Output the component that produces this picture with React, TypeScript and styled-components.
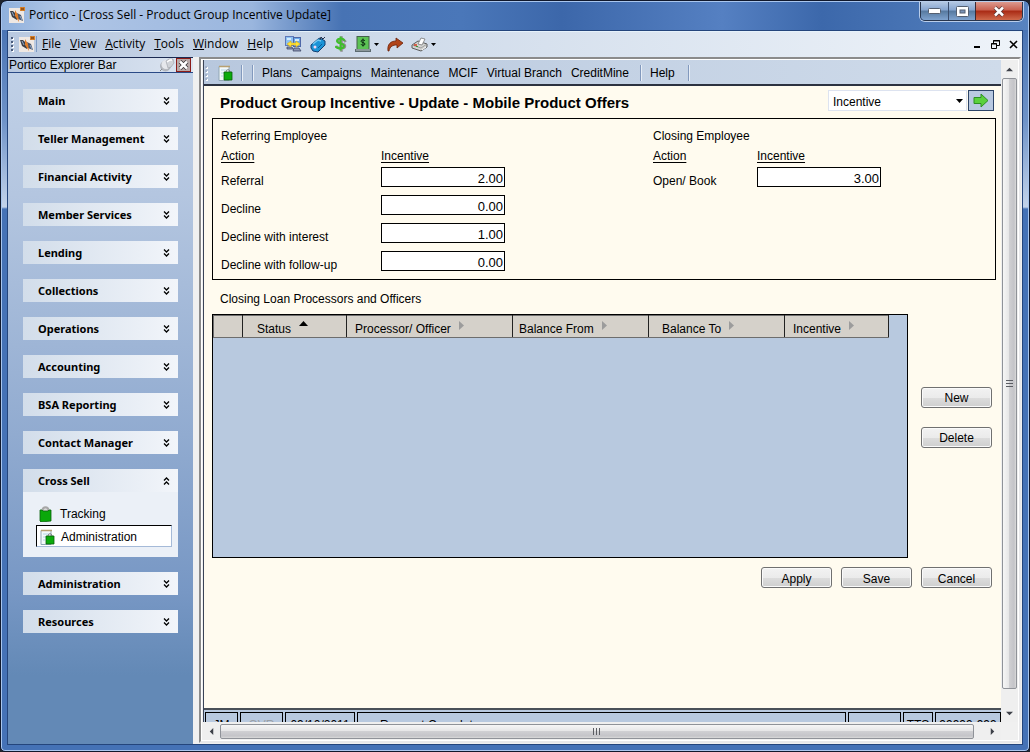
import React from 'react';
import styled, { createGlobalStyle } from 'styled-components';

const Global = createGlobalStyle`
  * { box-sizing: border-box; }
  body { margin: 0; background: #20242c; font-family: "Liberation Sans", Arial, sans-serif; font-size: 12px; line-height: 16px; color: #000; }
  button, input, select { font: inherit; color: inherit; margin: 0; }
  a { color: inherit; text-decoration: none; }
  svg { display: block; flex: none; }
`;

const Window = styled.div`
  height: 100vh;
  min-height: 640px;
  display: flex;
  flex-direction: column;
  padding: 0 6px 6px;
  border: 1px solid #10182c;
  border-radius: 7px 7px 5px 5px;
  overflow: hidden;
  background: linear-gradient(#3f6bae 0, #6f93c8 120px, #c3d3ea 206px, #4572b6 208px, #4572b6 100%);
  box-shadow: inset 0 0 0 1px #a9c6ee;
`;
const TitleBar = styled.header`
  flex: none;
  height: 28px;
  margin: 1px -5px 0;
  padding: 0 5px 2px 7px;
  display: flex;
  align-items: center;
  gap: 4px;
  background: linear-gradient(90deg, #8fb0dc 0, #b0c6e6 60px, #9ab6de 250px, #4773b4 340px, #4a77b9 460px, #3c67aa 560px, #5580c2 720px, #3c68ab 820px, #5783c0 100%);
`;
const WindowTitle = styled.h1`
  flex: 1;
  margin: 0;
  font: 12px/16px "Open Sans", "Noto Sans", sans-serif;
  white-space: nowrap;
`;
const Captions = styled.div`
  align-self: flex-start;
  display: flex;
  height: 19px;
  border: 1px solid #28354d;
  border-top: 0;
  border-radius: 0 0 5px 5px;
  overflow: hidden;
  box-shadow: 0 0 0 1px #b9cdea;
`;
const CaptionButton = styled.button<{ $close?: boolean }>`
  width: ${p => (p.$close ? 47 : 27)}px;
  padding: 0;
  display: grid;
  place-items: center;
  border: 0;
  border-left: ${p => (p.$close ? '1px solid #3b2a35' : '0')};
  background: ${p => p.$close
    ? 'linear-gradient(#dc9a8f 0, #c9604f 45%, #a92a14 50%, #cf6a4c 100%)'
    : 'linear-gradient(#b3c7e2 0, #86a4cf 45%, #56799f 50%, #7fa3cf 100%)'};
  & + &:not(:last-child) { border-left: 1px solid #3a4d6d; }
`;
const Client = styled.div`
  flex: 1;
  min-height: 0;
  display: flex;
  flex-direction: column;
  border: 1px solid #24457c;
  background: #f0f0f0;
`;
const MenuBar = styled.nav`
  flex: none;
  height: 26px;
  display: flex;
  align-items: center;
  padding: 0 4px 1px 3px;
  border-top: 1px solid #e6f2fb;
  background: linear-gradient(90deg, #b9c9e0 0, #d3deec 45%, #eef3f9 100%);
  font: 12px/16px "Open Sans", "Noto Sans", sans-serif;
`;
const MenuLogo = styled.span`
  margin-left: 4px;
  padding-right: 1px;
  border-right: 1px solid #7d9ac4;
`;
const Menus = styled.div`
  display: flex;
  gap: 9px;
  margin: 0 12px 0 5px;
`;
const MenuLink = styled.a`
  display: inline-block;
  &::first-letter { text-decoration: underline; }
`;
const Tools = styled.div`
  display: flex;
  align-items: center;
  gap: 8px;
  flex: 1;
`;
const IconButton = styled.button`
  padding: 0;
  border: 0;
  background: none;
  display: flex;
  align-items: center;
  gap: 3px;
`;
const ChildCaptions = styled.div`
  display: flex;
  gap: 9px;
`;
const Body = styled.div`
  flex: 1;
  min-height: 0;
  display: flex;
  gap: 6px;
`;
const Sidebar = styled.aside`
  flex: none;
  width: 185px;
  display: flex;
  flex-direction: column;
  background: linear-gradient(#c2d2e8 0, #b4c6e0 20%, #91abd0 55%, #7797c4 78%, #6389b6 90%, #6389b6 100%);
`;
const SidebarHead = styled.div`
  height: 16px;
  display: flex;
  align-items: center;
  gap: 1px;
  padding: 0 2px 0 1px;
  border-top: 1px solid #1a2a52;
  border-bottom: 1px solid #2a4a86;
  background: linear-gradient(90deg, #b9c9e0, #dce5f1);
`;
const SidebarTitle = styled.h2`
  flex: 1;
  margin: 0;
  font: 12px/14px "Liberation Sans", Arial, sans-serif;
`;
const Groups = styled.div`
  display: flex;
  flex-direction: column;
  gap: 15px;
  padding: 16px 15px;
`;
const Group = styled.section`
  background: #ebf0f7;
`;
const GroupButton = styled.button`
  width: 100%;
  height: 23px;
  display: flex;
  align-items: center;
  justify-content: space-between;
  padding: 0 8px 0 15px;
  border: 0;
  background: linear-gradient(90deg, #d2ddea, #f2f5fa);
  font: bold 11px/16px "Noto Sans", "Open Sans", sans-serif;
`;
const GroupItems = styled.div`
  display: flex;
  flex-direction: column;
  padding: 10px 6px 10px 13px;
`;
const GroupItem = styled.a<{ $active?: boolean }>`
  height: ${p => (p.$active ? 22 : 23)}px;
  display: flex;
  align-items: center;
  gap: ${p => (p.$active ? 6 : 8)}px;
  padding-left: 3px;
  padding-top: ${p => (p.$active ? 1 : 0)}px;
  border: ${p => (p.$active ? '1px solid #a5bad8' : '0')};
  border-top-color: #000;
  border-left-color: #000;
  background: ${p => (p.$active ? '#fff' : 'none')};
`;
const Child = styled.main`
  flex: 1;
  min-width: 0;
  margin: 0 1px 1px 0;
  display: grid;
  grid-template: minmax(0, 1fr) 18px / minmax(0, 1fr) 17px;
  border: 2px solid #6b6f78;
  border-color: #8b8b8b #e8e8ea #e8e8ea #8b8b8b;
  outline: 1px solid #fff;
  outline-offset: -3px;
  padding: 1px 1px 1px 2px;
  background: #f0f0f0;
`;
const View = styled.div`
  min-width: 0;
  min-height: 0;
  display: flex;
  flex-direction: column;
  overflow: hidden;
  border-left: 1px solid #3a4356;
  background: #fffbef;
`;
const ToolRow = styled.nav`
  flex: none;
  height: 26px;
  display: flex;
  align-items: center;
  padding: 1px 0 0 1px;
  border-bottom: 2px solid #2c3240;
  background: linear-gradient(90deg, #b8c8de, #cfdbea);
`;
const OffersButton = styled(IconButton)`
  margin-left: 9px;
`;
const RowLinks = styled.div`
  display: flex;
  gap: 9px;
  padding: 0 8px;
  white-space: nowrap;
`;
const Divider = styled.span<{ $gap?: number }>`
  width: 2px;
  height: 16px;
  margin-left: ${p => p.$gap ?? 0}px;
  border-left: 1px solid #8299bd;
  border-right: 1px solid #e8eef6;
`;
const Page = styled.div`
  flex: 1;
  min-height: 0;
  padding: 4px 5px 0 8px;
`;
const Heading = styled.div`
  height: 21px;
  margin-bottom: 7px;
  padding: 0 2px 0 8px;
  display: flex;
  align-items: center;
  gap: 1px;
`;
const PageTitle = styled.h2`
  flex: 1;
  margin: 5px 0 0;
  font: bold 15px/18px "Liberation Sans", Arial, sans-serif;
`;
const SelectBox = styled.span`
  display: grid;
  align-items: center;
  width: 139px;
  height: 21px;
  border: 1px solid #dde3f0;
  background: #fff;
  & > * { grid-area: 1 / 1; }
  & > svg { justify-self: end; margin-right: 3px; pointer-events: none; }
`;
const Select = styled.select`
  appearance: none;
  width: 100%;
  height: 19px;
  padding: 2px 4px 0;
  border: 0;
  background: none;
`;
const GoButton = styled.button`
  width: 26px;
  height: 21px;
  padding: 0;
  display: grid;
  place-items: center;
  border: 1px solid #2d4467;
  background: #b9c9e0;
`;
const Panel = styled.div`
  min-height: 162px;
  display: grid;
  grid-template-columns: 432px 1fr;
  padding: 9px 8px 8px;
  border: 1px solid #000;
`;
const FormSection = styled.section``;
const SectionTitle = styled.h3`
  margin: 0 0 4px;
  font: 12px/16px "Liberation Sans", Arial, sans-serif;
`;
const FormTable = styled.div<{ $label: number }>`
  display: grid;
  grid-template-columns: ${p => p.$label}px 124px;
  row-gap: 8px;
`;
const ColumnTitle = styled.span`
  height: 11px;
  text-decoration: underline;
  text-underline-offset: 2px;
`;
const FieldLabel = styled.label`
  padding-top: 6px;
  height: 20px;
  white-space: nowrap;
`;
const Field = styled.input`
  width: 100%;
  height: 20px;
  padding: 2px 1px 0;
  border: 1px solid #000;
  border-radius: 0;
  background: #fff;
  text-align: right;
  font-size: 13px;
`;
const ListTitle = styled.h3`
  margin: 11px 0 7px 8px;
  font: 12px/16px "Liberation Sans", Arial, sans-serif;
`;
const ListRow = styled.div`
  display: flex;
  align-items: center;
  gap: 13px;
  padding-right: 4px;
`;
const ListBox = styled.div`
  flex: 1;
  height: 244px;
  border: 1px solid #000;
  background: #b8c9df;
`;
const List = styled.table`
  border-collapse: collapse;
  table-layout: fixed;
  width: 675px;
`;
const Column = styled.th<{ $w: number; $pad?: number }>`
  width: ${p => p.$w}px;
  height: 22px;
  padding: 4px 0 0 ${p => p.$pad ?? 0}px;
  border: 1px solid #6d6d6d;
  border-right-color: #222;
  background: #d5d1ca;
  text-align: left;
  font-weight: normal;
`;
const ColumnInner = styled.span`
  display: flex;
  gap: 8px;
`;
const Side = styled.div`
  display: flex;
  flex-direction: column;
  gap: 19px;
  padding-bottom: 38px;
`;
const PushButton = styled.button`
  width: 71px;
  height: 21px;
  padding: 2px 0 0;
  border: 1px solid #707070;
  border-radius: 3px;
  box-shadow: inset 0 0 0 1px #fafafa;
  background: linear-gradient(#f2f2f2 0, #ebebeb 50%, #dddddd 51%, #cfcfcf 100%);
`;
const Actions = styled.div`
  display: flex;
  justify-content: flex-end;
  gap: 9px;
  padding: 9px 4px 0 0;
`;
const StatusBar = styled.footer`
  flex: none;
  height: 14px;
  display: flex;
  gap: 2px;
  padding: 2px 0 0 1px;
  overflow: hidden;
  border-top: 2px solid #4a5058;
  background: #b8c9df;
`;
const StatusCell = styled.span<{ $w?: number; $dim?: boolean }>`
  flex: ${p => (p.$w ? `0 0 ${p.$w}px` : '1')};
  height: 24px;
  padding-top: 4px;
  padding-left: ${p => (p.$w ? 0 : 22)}px;
  border: 1px solid #000;
  text-align: ${p => (p.$w ? 'center' : 'left')};
  color: ${p => (p.$dim ? '#9a9fa6' : '#000')};
  white-space: nowrap;
  overflow: hidden;
`;
const Scrollbar = styled.div<{ $vertical?: boolean }>`
  display: flex;
  flex-direction: ${p => (p.$vertical ? 'column' : 'row')};
  background: #efefef;
  padding: ${p => (p.$vertical ? '0 1px' : '2px 0 1px')};
`;
const ScrollButton = styled.button<{ $size: number; $end?: 'bottom' | 'right' }>`
  flex: 0 0 ${p => p.$size}px;
  padding: 0 ${p => (p.$end === 'right' ? 5 : 0)}px ${p => (p.$end === 'bottom' ? 5 : 0)}px 0;
  border: 0;
  background: none;
  display: flex;
  align-items: ${p => (p.$end === 'bottom' ? 'flex-end' : 'center')};
  justify-content: ${p => (p.$end === 'right' ? 'flex-end' : 'center')};
`;
const Thumb = styled.div<{ $vertical?: boolean }>`
  flex: 1;
  display: grid;
  place-items: center;
  border: 1px solid #8f9298;
  border-radius: 2px;
  background: linear-gradient(${p => (p.$vertical ? '90deg' : '180deg')}, #f6f6f6 0, #e6e6e7 45%, #cfcfd2 50%, #c4c4c8 85%, #dadada 100%);
`;

const Logo = () => (
  <svg width="16" height="16" viewBox="0 0 16 16">
    <rect y="1" width="15" height="15" fill="#efe8e3" />
    <path d="M1 4l3 0 4 4v5l-5-3z" fill="#3d4048" />
    <path d="M8 6l4 2 2 6-5-2z" fill="#4b5568" />
    <path d="M6 3l3 5 1 7-4-6z" fill="#e07c28" />
    <path d="M3 5l2 4M11 9l2 4" stroke="#8fa9cc" />
    <path d="M11 0h5v4h-5z" fill="#d9822b" /><path d="M12 1l3 2m0-2l-3 2" stroke="#8a4a12" />
  </svg>
);
const Grip = ({ light }: { light?: boolean }) => (
  <svg width="4" height="16" viewBox="0 0 4 16">
    {[1, 5, 9, 13].map(y => <g key={y}><rect x="1" y={y + 1} width="2" height="2" fill="#fff" /><rect y={y} width="2" height="2" fill={light ? '#a3b2c9' : '#4b5c7c'} /></g>)}
  </svg>
);
const Caret = () => <svg width="5" height="3" viewBox="0 0 5 3"><path d="M0 0h5L2.500 3z" /></svg>;
const Screens = () => (
  <svg width="17" height="16" viewBox="0 0 17 16">
    <rect x=".5" y=".5" width="8" height="9" fill="#8ec2f2" stroke="#5e78b8" />
    <rect x="8.500" y="1.500" width="7" height="9" fill="#6ba8e8" stroke="#4f68a8" />
    <path d="M2 2h4v2H2zM10 3h4v2h-4z" fill="#d3eafc" />
    <path d="M2 11h5l1 2H2zM9 12h5l2 3H8z" fill="#8b94b2" stroke="#3d4668" strokeWidth=".8" />
    <path d="M2 8l4-3v2h5V5l4 3-4 3V9H6v2z" fill="#ffe436" stroke="#d9a91a" strokeWidth=".6" />
  </svg>
);
const Tag = () => (
  <svg width="17" height="17" viewBox="0 0 17 17">
    <path d="M1 9l7-6 2-1 5 3v4l-7 7-5-1-2-3z" fill="#1b93d6" stroke="#123f72" />
    <path d="M3 8l5-4 3 1" stroke="#72c8f0" strokeWidth="1.500" fill="none" />
    <circle cx="5" cy="11" r="1.500" fill="#f3d5f1" /><path d="M8 12l4-4" stroke="#0b5c98" />
    <path d="M10 4l1-3 2 2 2-2" fill="none" stroke="#26324c" />
  </svg>
);
const Dollar = () => (
  <svg width="12" height="16" viewBox="0 0 12 16" fill="none" strokeLinecap="square">
    <path d="M10 5c-1-2-7-3-7 0s7 2 7 5-6 3-8 1M6.500 1.500v13" stroke="#8c8f8b" strokeWidth="2.500" />
    <path d="M9 4c-1-2-7-2-7 1s7 2 7 5-6 3-8 1M5.500 1.500v12" stroke="#3fc02b" strokeWidth="2" />
  </svg>
);
const Bill = () => (
  <svg width="16" height="16" viewBox="0 0 16 16">
    <rect x="2" y=".5" width="12" height="13" fill="#5cc254" stroke="#44604b" />
    <rect y="13" width="16" height="3" fill="#5d6b70" /><path d="M1 14h14" stroke="#bcc5c5" />
    <path d="M10 5c-.5-1.500-4-1.500-4 .2s4 1 4 2.800-3.500 1.800-4 .2M8 2.500v8" fill="none" stroke="#0a2b12" />
  </svg>
);
const Redo = () => <svg width="16" height="15" viewBox="0 0 16 15"><path d="M1 14C0 7 4 4 9 4V1l7 5-6 5V8C6 8 3 9 2 14z" fill="#b1441a" stroke="#6b2108" strokeWidth=".8" /></svg>;
const Printer = () => (
  <svg width="17" height="15" viewBox="0 0 17 15">
    <path d="M1 8l6-4 9 3v3l-6 4-9-3z" fill="#d3d4d2" stroke="#5a5b5b" />
    <path d="M7 7l3-6 4 1-3 6z" fill="#fff" stroke="#777" strokeWidth=".8" />
    <path d="M1 8l9 3 6-4" fill="none" stroke="#909090" strokeWidth=".8" />
    <path d="M3 8h3" stroke="#d63b1e" strokeWidth="1.500" /><path d="M5 9.500h2" stroke="#3a9c3a" />
    <path d="M11 13l4-3" stroke="#fff" />
  </svg>
);
const Pin = () => (
  <svg width="16" height="14" viewBox="0 0 16 14">
    <path d="M1 13l4-4" stroke="#808080" />
    <ellipse cx="6.500" cy="8" rx="5" ry="5" fill="#b6b9bf" stroke="#a0a3aa" strokeWidth=".6" />
    <ellipse cx="7" cy="6.500" rx="4.500" ry="4.500" fill="#e6e8ec" />
    <path d="M7 3l3-2h4l1 4-3 4-3 1z" fill="#d0d3d8" stroke="#9a9da5" strokeWidth=".6" />
    <path d="M8 4l3-2h2" stroke="#fff" fill="none" strokeWidth="1.500" />
  </svg>
);
const PanelClose = () => (
  <svg width="15" height="14" viewBox="0 0 15 14">
    <rect x=".5" y=".5" width="14" height="13" fill="#b9a9a8" stroke="#8c1c18" />
    <path d="M4 3.500l7 7m0-7l-7 7" stroke="#333" strokeWidth="4" /><path d="M4 3.500l7 7m0-7l-7 7" stroke="#fff" strokeWidth="2.500" />
  </svg>
);
const Bag = () => (
  <svg width="13" height="16" viewBox="0 0 13 16">
    <path d="M3.500 5c0-5 6-5 6 0" fill="#d8d8d8" stroke="#a7a7a7" strokeWidth="2" />
    <path d="M1 4h2l1 1h5l1-1h2v11l-10 1-1-1z" fill="#0aa80a" stroke="#07600a" strokeWidth=".8" />
  </svg>
);
const DocBag = () => (
  <svg width="15" height="16" viewBox="0 0 15 16">
    <path d="M1 1.500h10v14H1z" fill="#f3f9fb" stroke="#91a7b4" /><path d="M1 1.500h11" stroke="#b8a172" strokeWidth="1.500" />
    <path d="M3 5h6M3 8h3M3 11h2" stroke="#b4d7e6" /><path d="M8 7c0-3 4-3 4 0" fill="none" stroke="#777" />
    <path d="M6 7h8v8H6z" fill="#0cab0c" stroke="#07600a" strokeWidth=".8" />
  </svg>
);
const Chevrons = ({ up }: { up?: boolean }) => (
  <svg width="7" height="8" viewBox="0 0 7 8" fill="none" stroke="#000" strokeWidth="1.300">
    <path d={up ? 'M1 3.500L3.500 1 6 3.500M1 7.500L3.500 5 6 7.500' : 'M1 .5L3.500 3 6 .5M1 4.500L3.500 7 6 4.500'} />
  </svg>
);
const Arrow = ({ dir }: { dir: 'up' | 'down' | 'left' | 'right' }) => {
  const d = { up: 'M0 6l4-4 4 4z', down: 'M0 2h8L4 6z', left: 'M6 0v8L2 4z', right: 'M2 0v8l4-4z' }[dir];
  return <svg width="7" height="7" viewBox="0 0 8 8"><path d={d} fill="#3d4048" /></svg>;
};
const Ridges = ({ vertical }: { vertical?: boolean }) => (
  <svg width="8" height="8" viewBox="0 0 8 8" stroke="#5b5d63"><path d={vertical ? 'M0 .5h7M0 3.500h7M0 6.500h7' : 'M.5 0v7M3.500 0v7M6.500 0v7'} /></svg>
);
const SortUp = () => <svg width="9" height="5" viewBox="0 0 9 5"><path d="M0 5h9L4.500 0z" /></svg>;
const SortNone = () => <svg width="5" height="9" viewBox="0 0 5 9"><path d="M0 0v9l5-4.500z" fill="#9c9c9c" /></svg>;
const Go = () => <svg width="16" height="15" viewBox="0 0 16 15"><path d="M1 4.500h7V1l7 6.500L8 14v-3.500H1z" fill="#5bd13c" stroke="#2c8f22" /></svg>;

const groupNames = ['Main', 'Teller Management', 'Financial Activity', 'Member Services', 'Lending', 'Collections', 'Operations', 'Accounting', 'BSA Reporting', 'Contact Manager', 'Cross Sell', 'Administration', 'Resources'];
const referring = [['Referral', '2.00'], ['Decline', '0.00'], ['Decline with interest', '1.00'], ['Decline with follow-up', '0.00']];
const closing = [['Open/ Book', '3.00']];

const IncentiveForm = ({ title, rows, label, id }: { title: string; rows: string[][]; label: number; id: string }) => (
  <FormSection>
    <SectionTitle>{title}</SectionTitle>
    <FormTable $label={label}>
      <ColumnTitle>Action</ColumnTitle>
      <ColumnTitle>Incentive</ColumnTitle>
      {rows.map(([name, value], i) => (
        <React.Fragment key={name}>
          <FieldLabel htmlFor={`${id}${i}`}>{name}</FieldLabel>
          <Field id={`${id}${i}`} defaultValue={value} />
        </React.Fragment>
      ))}
    </FormTable>
  </FormSection>
);

export default function App() {
  return (
    <>
      <Global />
      <Window>
        <TitleBar>
          <Logo />
          <WindowTitle>Portico - [Cross Sell - Product Group Incentive Update]</WindowTitle>
          <Captions>
            <CaptionButton aria-label="Minimize"><svg width="13" height="6"><rect x=".5" y=".5" width="12" height="5" rx="1" fill="#fff" stroke="#555f70" /></svg></CaptionButton>
            <CaptionButton aria-label="Maximize"><svg width="13" height="11"><rect x=".5" y=".5" width="12" height="10" rx="1" fill="#fff" stroke="#555f70" /><rect x="4" y="4" width="5" height="3" fill="#7893b8" stroke="#555f70" /></svg></CaptionButton>
            <CaptionButton $close aria-label="Close"><svg width="14" height="11"><path d="M3 1.500l8 8m0-8l-8 8" stroke="#5b3a3a" strokeWidth="4" /><path d="M3 1.500l8 8m0-8l-8 8" stroke="#fff" strokeWidth="2.500" /></svg></CaptionButton>
          </Captions>
        </TitleBar>
        <Client>
          <MenuBar>
            <Grip /><MenuLogo><Logo /></MenuLogo>
            <Menus>{['File', 'View', 'Activity', 'Tools', 'Window', 'Help'].map(m => <MenuLink key={m} href="#">{m}</MenuLink>)}</Menus>
            <Tools>
              <IconButton aria-label="Screens"><Screens /></IconButton>
              <IconButton aria-label="Tag"><Tag /></IconButton>
              <IconButton aria-label="Money"><Dollar /></IconButton>
              <IconButton aria-label="Cash"><Bill /><Caret /></IconButton>
              <IconButton aria-label="Forward"><Redo /></IconButton>
              <IconButton aria-label="Print"><Printer /><Caret /></IconButton>
            </Tools>
            <ChildCaptions>
              <IconButton aria-label="Minimize child"><svg width="9" height="9"><path d="M1 7h6" stroke="#000" strokeWidth="2" /></svg></IconButton>
              <IconButton aria-label="Restore child"><svg width="9" height="9" fill="none" stroke="#000"><path d="M2.500 3V.5h6v5H6M2 1h7M.5 3.500h5v5h-5zM0 4h6" /></svg></IconButton>
              <IconButton aria-label="Close child"><svg width="9" height="9"><path d="M1 1l7 7m0-7l-7 7" stroke="#000" strokeWidth="1.600" /></svg></IconButton>
            </ChildCaptions>
          </MenuBar>
          <Body>
            <Sidebar>
              <SidebarHead>
                <SidebarTitle>Portico Explorer Bar</SidebarTitle>
                <IconButton aria-label="Pin"><Pin /></IconButton>
                <IconButton aria-label="Close explorer bar"><PanelClose /></IconButton>
              </SidebarHead>
              <Groups>
                {groupNames.map(name => (
                  <Group key={name}>
                    <GroupButton>{name}<Chevrons up={name === 'Cross Sell'} /></GroupButton>
                    {name === 'Cross Sell' && (
                      <GroupItems>
                        <GroupItem href="#"><Bag />Tracking</GroupItem>
                        <GroupItem href="#" $active><DocBag />Administration</GroupItem>
                      </GroupItems>
                    )}
                  </Group>
                ))}
              </Groups>
            </Sidebar>
            <Child>
              <View>
                <ToolRow>
                  <Grip light />
                  <OffersButton aria-label="Offers"><DocBag /></OffersButton>
                  <Divider $gap={8} /><Divider $gap={9} />
                  <RowLinks>{['Plans', 'Campaigns', 'Maintenance', 'MCIF', 'Virtual Branch', 'CreditMine'].map(m => <a key={m} href="#">{m}</a>)}</RowLinks>
                  <Divider $gap={3} />
                  <RowLinks><a href="#">Help</a></RowLinks>
                  <Divider $gap={5} />
                </ToolRow>
                <Page>
                  <Heading>
                    <PageTitle>Product Group Incentive - Update - Mobile Product Offers</PageTitle>
                    <SelectBox><Select aria-label="View" defaultValue="Incentive"><option>Incentive</option></Select><svg width="7" height="4"><path d="M0 0h7L3.500 4z" /></svg></SelectBox>
                    <GoButton aria-label="Go"><Go /></GoButton>
                  </Heading>
                  <Panel>
                    <IncentiveForm title="Referring Employee" rows={referring} label={160} id="ref" />
                    <IncentiveForm title="Closing Employee" rows={closing} label={104} id="close" />
                  </Panel>
                  <ListTitle>Closing Loan Processors and Officers</ListTitle>
                  <ListRow>
                    <ListBox>
                      <List>
                        <thead>
                          <tr>
                            <Column $w={29} aria-label="Select" />
                            <Column $w={104} $pad={14}><ColumnInner>Status<SortUp /></ColumnInner></Column>
                            <Column $w={166} $pad={8}><ColumnInner>Processor/ Officer<SortNone /></ColumnInner></Column>
                            <Column $w={136} $pad={6}><ColumnInner>Balance From<SortNone /></ColumnInner></Column>
                            <Column $w={136} $pad={13}><ColumnInner>Balance To<SortNone /></ColumnInner></Column>
                            <Column $w={104} $pad={8}><ColumnInner>Incentive<SortNone /></ColumnInner></Column>
                          </tr>
                        </thead>
                      </List>
                    </ListBox>
                    <Side><PushButton>New</PushButton><PushButton>Delete</PushButton></Side>
                  </ListRow>
                  <Actions><PushButton>Apply</PushButton><PushButton>Save</PushButton><PushButton>Cancel</PushButton></Actions>
                </Page>
                <StatusBar>
                  <StatusCell $w={33}>JM</StatusCell>
                  <StatusCell $w={43} $dim>OVR</StatusCell>
                  <StatusCell $w={70}>09/10/2011</StatusCell>
                  <StatusCell>Request Complete</StatusCell>
                  <StatusCell $w={53}></StatusCell>
                  <StatusCell $w={30}>TTS</StatusCell>
                  <StatusCell $w={66}>99999-999</StatusCell>
                </StatusBar>
              </View>
              <Scrollbar $vertical>
                <ScrollButton $size={18} aria-label="Scroll up"><Arrow dir="up" /></ScrollButton>
                <Thumb $vertical><Ridges vertical /></Thumb>
                <ScrollButton $size={33} $end="bottom" aria-label="Scroll down"><Arrow dir="down" /></ScrollButton>
              </Scrollbar>
              <Scrollbar>
                <ScrollButton $size={17} aria-label="Scroll left"><Arrow dir="left" /></ScrollButton>
                <Thumb><Ridges /></Thumb>
                <ScrollButton $size={27} $end="right" aria-label="Scroll right"><Arrow dir="right" /></ScrollButton>
              </Scrollbar>
            </Child>
          </Body>
        </Client>
      </Window>
    </>
  );
}
